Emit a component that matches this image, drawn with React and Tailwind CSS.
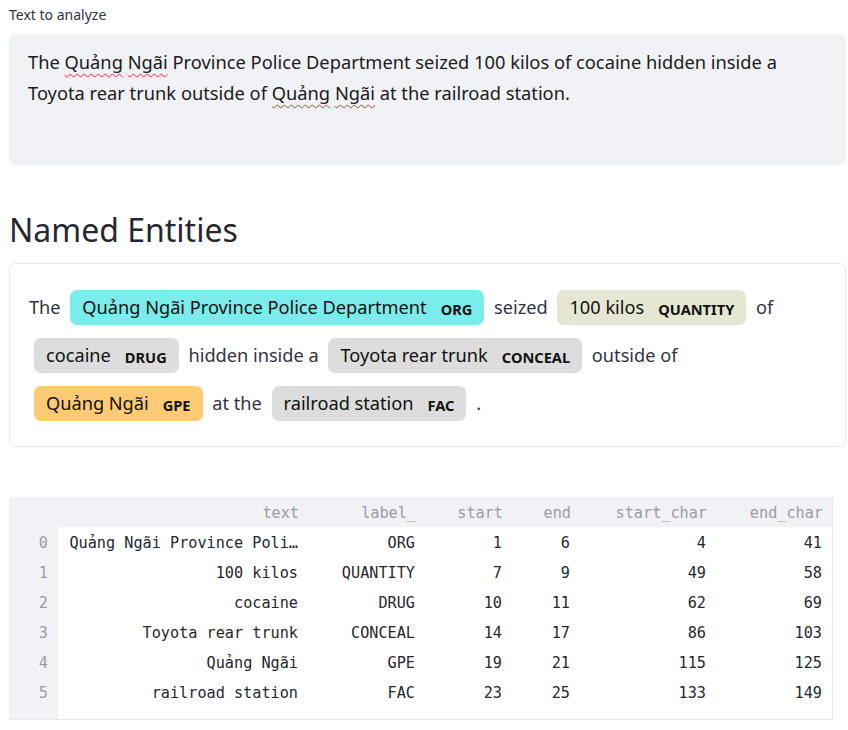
import React from 'react';

const SANS = { fontFamily: '"Noto Sans", "Open Sans", sans-serif' };

const Mark = ({ text, label, bg }) => (
  <span
    className={`inline-block ${bg} mx-[5px] rounded-[7px] px-[12px] leading-[19px] py-[8px] text-[#111]`}
  >
    {text}
    <span className="ml-[14px] align-middle text-[14.6px] font-bold uppercase leading-none">{label}</span>
  </span>
);

const Squiggle = ({ children }) => (
  <span className="underline decoration-wavy decoration-red-500 decoration-1 underline-offset-[4px]">{children}</span>
);

const rows = [
  ['0', 'Quảng Ngãi Province Poli…', 'ORG', '1', '6', '4', '41'],
  ['1', '100 kilos', 'QUANTITY', '7', '9', '49', '58'],
  ['2', 'cocaine', 'DRUG', '10', '11', '62', '69'],
  ['3', 'Toyota rear trunk', 'CONCEAL', '14', '17', '86', '103'],
  ['4', 'Quảng Ngãi', 'GPE', '19', '21', '115', '125'],
  ['5', 'railroad station', 'FAC', '23', '25', '133', '149'],
];

const headers = ['', 'text', 'label_', 'start', 'end', 'start_char', 'end_char'];

export default function App() {
  return (
    <div className="min-h-[730px] w-[848px] bg-white pl-[9px] pr-[2px] text-[#31333f]" style={SANS}>
      {/* text area */}
      <div className="pt-[5px] text-[14px] leading-[20px]">Text to analyze</div>
      <div className="mt-[9px] h-[131px] rounded-[7px] bg-[#f0f2f6] px-[19px] pt-[12px] text-[18.3px] leading-[31px] text-[#1b1b22]">
        <div>
          The <Squiggle>Quảng</Squiggle> <Squiggle>Ngãi</Squiggle> Province Police Department seized 100 kilos of cocaine hidden inside a
        </div>
        <div>
          Toyota rear trunk outside of <Squiggle>Quảng</Squiggle> <Squiggle>Ngãi</Squiggle> at the railroad station.
        </div>
      </div>

      {/* heading */}
      <h2 className="mt-[45px] text-[32px] font-normal leading-[40px] text-[#262730]">Named Entities</h2>

      {/* entities */}
      <div className="mt-[13px] rounded-[6px] border border-[#e6e9ef] px-[19px] py-[19px] text-[18.2px] leading-[48px]">
        <div className="whitespace-nowrap">
          The <Mark text="Quảng Ngãi Province Police Department" label="ORG" bg="bg-[#7aecec]" /> seized{' '}
          <Mark text="100 kilos" label="QUANTITY" bg="bg-[#e4e7d2]" /> of
        </div>
        <div className="whitespace-nowrap">
          <Mark text="cocaine" label="DRUG" bg="bg-[#dddddd]" /> hidden inside a{' '}
          <Mark text="Toyota rear trunk" label="CONCEAL" bg="bg-[#dddddd]" /> outside of
        </div>
        <div className="whitespace-nowrap">
          <Mark text="Quảng Ngãi" label="GPE" bg="bg-[#feca74]" /> at the{' '}
          <Mark text="railroad station" label="FAC" bg="bg-[#dddddd]" /> .
        </div>
      </div>

      {/* dataframe */}
      <div
        className="mt-[50px] w-[824px] border-b border-r border-[#e6e9ef] bg-[#f0f2f6] pt-px text-[15.2px]"
        style={{ fontFamily: '"DejaVu Sans Mono", "Liberation Mono", monospace' }}
      >
        <div className="grid grid-cols-[50px_250px_117px_87px_68px_136px_116px]">
          {headers.map((h, i) => (
            <div key={i} className="h-[29px] pr-[10px] text-right leading-[30px] text-[#9a9ca4]">
              {h}
            </div>
          ))}
        </div>
        <div className="flex">
          <div className="w-[50px] pb-[12px]">
            {rows.map((r) => (
              <div key={r[0]} className="h-[30px] pr-[10px] text-right leading-[32px] text-[#9a9ca4]">
                {r[0]}
              </div>
            ))}
          </div>
          <div className="flex-1 bg-white">
            {rows.map((r) => (
              <div key={r[0]} className="grid grid-cols-[250px_117px_87px_68px_136px_116px] text-[#262730]">
                {r.slice(1).map((c, j) => (
                  <div key={j} className="h-[30px] whitespace-nowrap pr-[10px] text-right leading-[32px]">
                    {c}
                  </div>
                ))}
              </div>
            ))}
          </div>
        </div>
      </div>
    </div>
  );
}
